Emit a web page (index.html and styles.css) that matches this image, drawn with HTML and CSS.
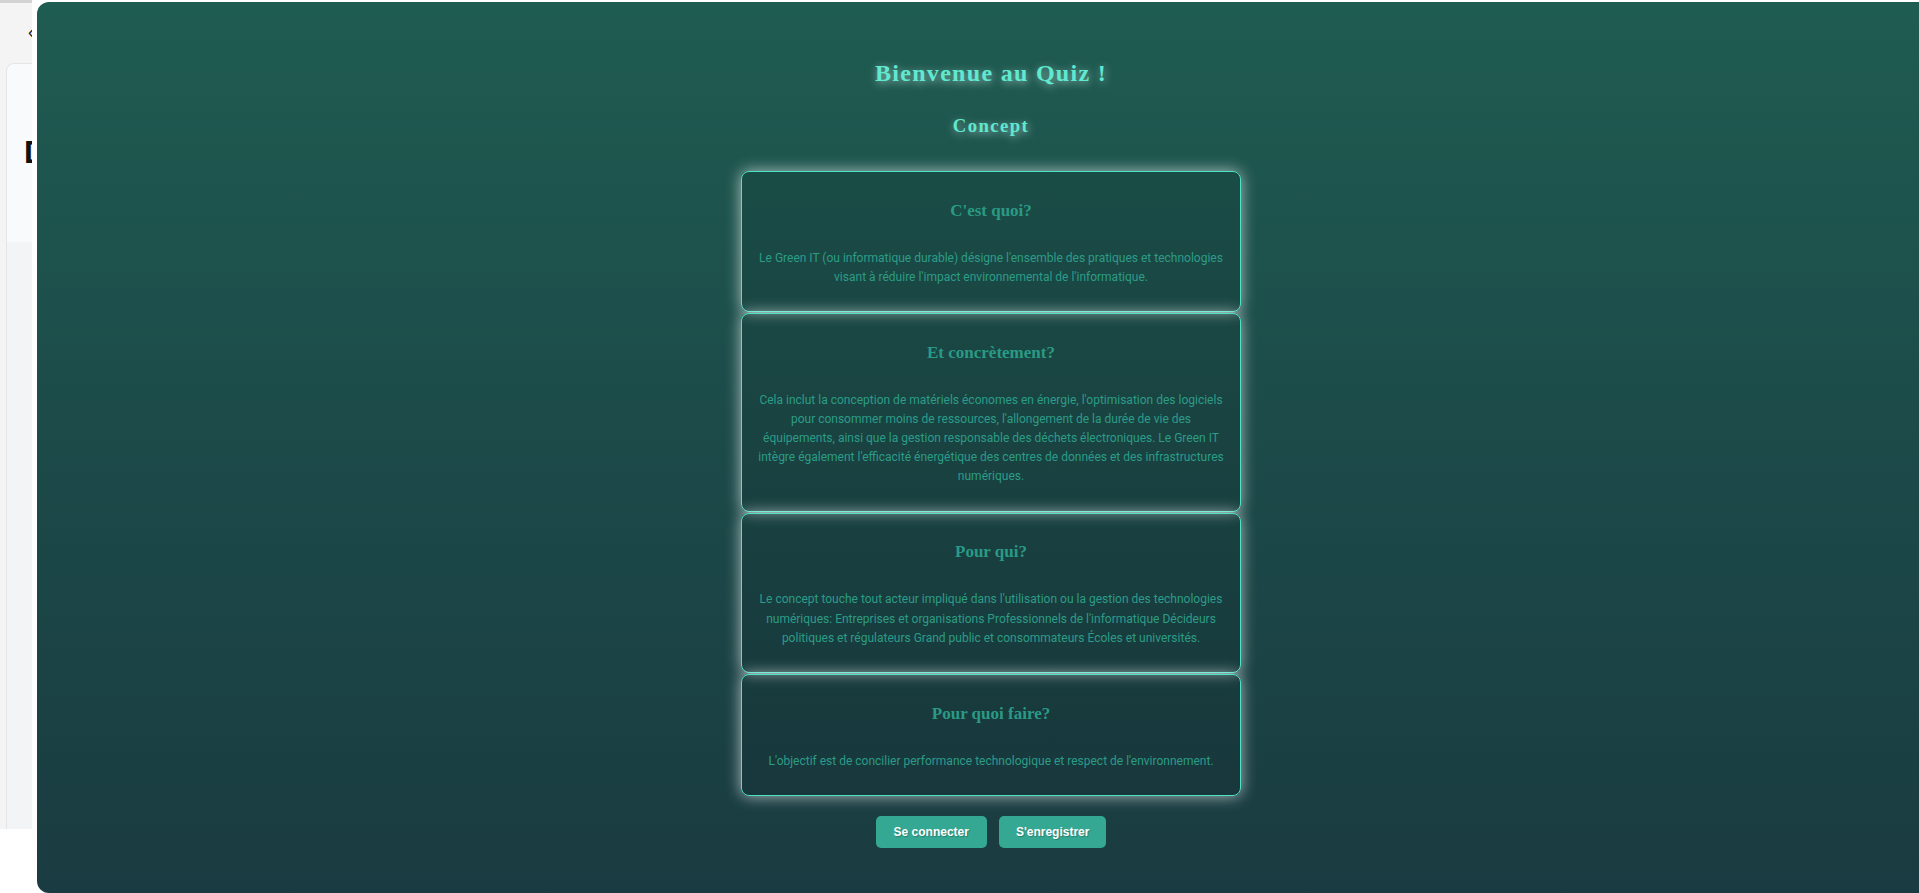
FILE: index.html
```html
<!DOCTYPE html>
<html lang="fr">
<head>
<meta charset="utf-8">
<title>Quiz Green IT</title>
<link rel="stylesheet" href="styles.css">
</head>
<body>
<div class="app">
  <div class="tab"></div>
  <div class="nav"><span class="back">‹</span></div>
  <div class="panel">
    <div class="panel-head"><h2 class="panel-title">Dashboard</h2></div>
    <div class="panel-body"></div>
  </div>
</div>

<div class="overlay">
  <h1 class="title">Bienvenue au Quiz !</h1>
  <h2 class="subtitle">Concept</h2>
  <div class="cards">
    <section class="card">
      <h3 class="card-title">C'est quoi?</h3>
      <p class="card-text">Le Green IT (ou informatique durable) désigne l'ensemble des pratiques et technologies visant à réduire l'impact environnemental de l'informatique.</p>
    </section>
    <section class="card">
      <h3 class="card-title">Et concrètement?</h3>
      <p class="card-text">Cela inclut la conception de matériels économes en énergie, l'optimisation des logiciels pour consommer moins de ressources, l'allongement de la durée de vie des équipements, ainsi que la gestion responsable des déchets électroniques. Le Green IT intègre également l'efficacité énergétique des centres de données et des infrastructures numériques.</p>
    </section>
    <section class="card">
      <h3 class="card-title">Pour qui?</h3>
      <p class="card-text">Le concept touche tout acteur impliqué dans l'utilisation ou la gestion des technologies numériques: Entreprises et organisations Professionnels de l'informatique Décideurs politiques et régulateurs Grand public et consommateurs Écoles et universités.</p>
    </section>
    <section class="card">
      <h3 class="card-title">Pour quoi faire?</h3>
      <p class="card-text">L'objectif est de concilier performance technologique et respect de l'environnement.</p>
    </section>
  </div>
  <div class="actions">
    <button class="btn btn-login">Se connecter</button>
    <button class="btn btn-register">S'enregistrer</button>
  </div>
</div>
</body>
</html>
```

FILE: styles.css
```css
html, body {
  margin: 0;
  padding: 0;
}

body {
  background: #ffffff;
  overflow: hidden;
  font-family: "Liberation Sans", Arial, sans-serif;
  width: 1919px;
  height: 893px;
}

/* underlying page (only a thin strip is visible) */
.app {
  width: 32px;
  height: 829px;
  background: #f4f4f5;
  display: flex;
  flex-direction: column;
  overflow: hidden;
}

.tab {
  width: 32px;
  height: 3px;
  flex: none;
  background: #d3d3d3;
}

.nav {
  height: 60px;
  flex: none;
  display: flex;
  align-items: center;
  padding-left: 28px;
}

.back {
  font-size: 18px;
  line-height: 20px;
  color: #222;
  margin-top: -2px;
}

.panel {
  flex: 1;
  width: 300px;
  margin-left: 6px;
  border: 1px solid #e3e5e8;
  border-bottom: none;
  border-radius: 8px 0 0 0;
  display: flex;
  flex-direction: column;
  overflow: hidden;
}

.panel-head {
  height: 178px;
  flex: none;
  background: #f9fafb;
  padding: 68px 0 0 17px;
  box-sizing: border-box;
}

.panel-title {
  margin: 0;
  font-size: 32px;
  line-height: 40px;
  font-weight: 700;
  color: #111;
  white-space: nowrap;
}

.panel-body {
  flex: 1;
  background: #f3f4f6;
}

/* quiz overlay */
.overlay {
  position: fixed;
  left: 37px;
  top: 2px;
  bottom: 0;
  width: 1908px;
  box-sizing: border-box;
  border-radius: 12px 0 0 12px;
  background: linear-gradient(to bottom, #1f5c51 0%, #1c4a49 50%, #1a3b41 100%);
  display: flex;
  flex-direction: column;
  align-items: center;
  padding-top: 56px;
}

.title {
  margin: 0;
  font-family: "Liberation Serif", "Times New Roman", serif;
  font-size: 24px;
  line-height: 30px;
  font-weight: 700;
  letter-spacing: 1.3px;
  color: #5fe9d0;
  text-shadow: 1px 2px 8px rgba(225, 255, 250, 0.6);
}

.subtitle {
  margin: 26px 0 0;
  font-family: "Liberation Serif", "Times New Roman", serif;
  font-size: 18.72px;
  line-height: 24px;
  font-weight: 700;
  letter-spacing: 1.4px;
  color: #5fe9d0;
  text-shadow: 1px 2px 8px rgba(225, 255, 250, 0.6);
}

.cards {
  margin-top: 33px;
  width: 500px;
  display: flex;
  flex-direction: column;
  gap: 1px;
}

.card {
  border: 1.5px solid #4fe2c6;
  border-radius: 8px;
  background: rgba(0, 0, 0, 0.1);
  box-shadow: 0 0 15px rgba(255, 255, 255, 0.65);
  padding: 27.5px 12px 24.2px;
  text-align: center;
}

.card-title {
  margin: 0;
  font-family: "Liberation Serif", "Times New Roman", serif;
  font-size: 17px;
  line-height: 22px;
  font-weight: 700;
  color: #2a9a85;
}

.card-text {
  margin: 27px 0 0;
  font-family: Roboto, "Noto Sans", sans-serif;
  font-size: 12px;
  line-height: 19.2px;
  color: #2c9c87;
}

.actions {
  margin-top: 20px;
  display: flex;
  gap: 12px;
}

.btn {
  border: none;
  border-radius: 5px;
  background: #34a892;
  color: #ffffff;
  font-family: "Liberation Sans", Arial, sans-serif;
  font-size: 12px;
  line-height: 14px;
  font-weight: 700;
  padding: 9px 18px;
  text-shadow: 1px 1px 1px rgba(0, 0, 0, 0.25);
  cursor: pointer;
}

.btn-register {
  padding: 9px 17px;
}
```
